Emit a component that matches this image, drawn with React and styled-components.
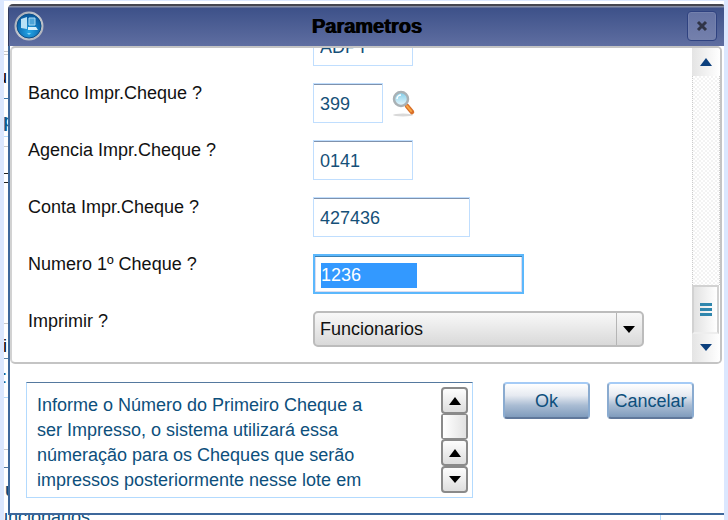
import React from 'react';
import styled, { createGlobalStyle } from 'styled-components';

const GlobalStyle = createGlobalStyle`
  * {
    box-sizing: border-box;
  }
  body {
    margin: 0;
    overflow: hidden;
    background: #dbe7fe;
    font-family: "Liberation Sans", Arial, sans-serif;
    font-size: 18px;
    line-height: 20px;
  }
  button, input, select, textarea {
    font: inherit;
    margin: 0;
  }
`;

const Page = styled.div`
  position: relative;
  height: 100vh;
  padding: 1px 4px 0;
  overflow: hidden;
`;

const Backdrop = styled.div`
  height: 100%;
  background: #fff;
  overflow: hidden;
`;

const Slice = styled.div`
  height: ${(props) => props.height}px;
  padding-top: ${(props) => props.pad || 0}px;
  border-bottom: 1px solid ${(props) => props.line || 'transparent'};
  color: ${(props) => props.ink || '#000'};
  font-weight: ${(props) => (props.bold ? 'bold' : 'normal')};
  text-indent: ${(props) => props.shift || 0}px;
  overflow: hidden;
`;

const LastSlice = styled.div`
  height: 40px;
  margin-right: 63px;
  border-right: 1px solid #b5dbfd;
  color: #0d4f7c;
  text-indent: -17px;
`;

const Dialog = styled.section`
  position: absolute;
  top: 4px;
  left: 8px;
  right: 4px;
  background: #fff;
  border-bottom: 2px solid #3e689b;
  border-radius: 5px 2px 0 0;
  overflow: hidden;
`;

const Header = styled.header`
  display: grid;
  grid-template-columns: 44px 1fr 44px;
  align-items: center;
  height: 42px;
  border-top: 2px solid #45464f;
  border-left: 1px solid #303a5e;
  background: linear-gradient(#858ca3 0, #858ca3 1px, #3d5189 2px, #5f6ea1 100%);
`;

const Title = styled.h1`
  margin: 0;
  text-align: center;
  font-size: 20px;
  line-height: 20px;
  color: #000;
  text-shadow: 1px 0 #000;
`;

const Logo = styled.svg`
  display: block;
  margin-left: 5px;
`;

const CloseButton = styled.button`
  display: flex;
  align-items: center;
  justify-content: center;
  width: 30px;
  height: 30px;
  margin-left: 7px;
  padding: 0;
  border: 1px solid #2f4280;
  border-radius: 4px;
  background: linear-gradient(#6573a4, #7480ac);
  box-shadow: inset 0 0 0 1px #7481ad;
`;

const Main = styled.div`
  border-left: 2px solid #3e689b;
`;

const Panel = styled.div`
  display: flex;
  height: 318px;
  margin-right: 2px;
  border: 2px solid #c4c4c4;
  border-left-color: #d2d2d2;
  border-radius: 5px;
  overflow: hidden;
`;

const Form = styled.form`
  flex: 1;
  display: flex;
  flex-direction: column;
  justify-content: flex-end;
  gap: 17px;
  padding: 0 48px 15px 16px;
  overflow: hidden;
`;

const Row = styled.div`
  display: grid;
  grid-template-columns: 285px 1fr;
  flex: none;
`;

const Label = styled.label`
  color: #111;
`;

const Field = styled.div`
  display: flex;
  align-items: center;
  gap: 9px;
`;

const TextInput = styled.input`
  width: ${(props) => props.$width}px;
  height: 40px;
  padding: 2px 6px 0;
  border: 1px solid #c0defe;
  border-radius: 0;
  outline: none;
  color: #165078;
  background: #fff;
  box-shadow: inset 0 1px #7f92ad;
`;

const ActiveInput = styled(TextInput)`
  border: 2px solid #5cb8fc;
  color: #fff;
  background: linear-gradient(#3399ff, #3399ff) 6px 7px / 96px 25px no-repeat #fff;
  box-shadow: inset 0 1px #3a7fb2, inset 0 0 0 1px #dcdcee;
`;

const LookupButton = styled.button`
  padding: 0;
  border: 0;
  background: none;
  svg {
    display: block;
  }
`;

const SelectBox = styled.div`
  position: relative;
  flex: 1;
  svg {
    position: absolute;
    top: 15px;
    right: 9px;
    pointer-events: none;
  }
`;

const Select = styled.select`
  display: block;
  appearance: none;
  width: 100%;
  height: 36px;
  padding: 0 5px;
  border: 2px solid #bcbcbc;
  border-radius: 5px;
  color: #111;
  background:
    linear-gradient(#b5b5b5, #b5b5b5) right 25px top / 1px 100% no-repeat,
    linear-gradient(#f8f8f8, #d9d9d9);
`;

const Scrollbar = styled.div`
  display: flex;
  flex-direction: column;
  width: 28px;
`;

const ScrollArrow = styled.button`
  display: flex;
  align-items: center;
  justify-content: center;
  height: 28px;
  padding: 0;
  border: 0;
  background: linear-gradient(90deg, #e4e4e4, #fff);
`;

const Track = styled.div`
  flex: 1;
  border: 1px dotted #ccc;
  border-width: 0 1px;
  background: repeating-conic-gradient(#f3f3f3 0 25%, #fff 0 50%) 0 0 / 4px 4px;
`;

const Thumb = styled.div`
  display: flex;
  flex-direction: column;
  align-items: center;
  justify-content: center;
  gap: 2px;
  height: 49px;
  margin-right: 1px;
  border: 2px solid #d2d2d2;
  border-bottom-color: #eee;
  background: linear-gradient(90deg, #e2e2e2, #fff);
`;

const Grip = styled.span`
  width: 12px;
  height: 3px;
  background: #2f86ad;
`;

const Footer = styled.footer`
  display: flex;
  align-items: flex-start;
  padding: 18px 30px 15px 16px;
`;

const Message = styled.div`
  display: flex;
  flex: 1;
  height: 116px;
  margin-right: 30px;
  border: 1px solid #b3dafe;
  border-top: 1px solid #55799f;
`;

const MessageText = styled.textarea`
  flex: 1;
  min-width: 0;
  height: 100px;
  margin-top: 10px;
  padding: 0 0 0 10px;
  border: 0;
  outline: none;
  resize: none;
  overflow: hidden;
  white-space: pre;
  line-height: 25px;
  color: #0d4f7c;
  background: transparent;
`;

const MessageScroll = styled.div`
  display: flex;
  flex-direction: column;
  width: 27px;
  margin: 4px;
`;

const ScrollCell = styled.button`
  flex: 1;
  display: flex;
  align-items: center;
  justify-content: center;
  padding: 0;
  border: 2px solid #8a8a8a;
  border-radius: 4px;
  background: linear-gradient(#fdfdfd, #dedede);
`;

const ScrollHandle = styled(ScrollCell)`
  border-width: 1px 2px;
  border-radius: 2px;
  background: linear-gradient(90deg, #fff, #e2e2e2);
`;

const ActionButton = styled.button`
  width: 87px;
  height: 37px;
  padding: 0;
  border: 2px solid #8aabd0;
  border-top-color: #a5cbf6;
  border-bottom-color: #60789b;
  border-radius: 4px;
  color: #0d4f7c;
  background: linear-gradient(#fff 0, #e6eaf1 35%, #a9bcd3 65%, #809cbd 100%);
  & + & {
    margin-left: 17px;
  }
`;

const Arrow = ({ down, color = '#000' }) => (
  <svg width="12" height="8" viewBox="0 0 12 8">
    <path d={down ? 'M0 0H12L6 7Z' : 'M0 8H12L6 0Z'} fill={color} />
  </svg>
);

const LogoIcon = () => (
  <Logo width="30" height="30" viewBox="0 0 30 30">
    <defs>
      <radialGradient id="logoBlue" cx="50%" cy="75%" r="75%">
        <stop offset="0" stopColor="#24a6e6" />
        <stop offset="0.5" stopColor="#1178bd" />
        <stop offset="1" stopColor="#07559a" />
      </radialGradient>
      <linearGradient id="logoRing" x1="0" y1="0" x2="1" y2="1">
        <stop offset="0" stopColor="#9da3b0" />
        <stop offset="0.5" stopColor="#c6cad1" />
        <stop offset="1" stopColor="#a9adb6" />
      </linearGradient>
    </defs>
    <circle cx="15" cy="15" r="14.5" fill="url(#logoRing)" />
    <circle cx="15" cy="15" r="12" fill="url(#logoBlue)" stroke="#0d4f88" />
    <path d="M7 8L13 6V18L7 17Z" fill="#b9e1f6" />
    <path d="M15 7H21V14H15Z" fill="#4fa5d8" stroke="#a9d9f2" strokeWidth="1" />
    <path d="M14 16H22L24 19H14Z" fill="#d6effb" />
    <path d="M13 22H17L15 24Z" fill="#7fd3f7" />
  </Logo>
);

const CloseIcon = () => (
  <svg width="12" height="12" viewBox="0 0 12 12">
    <path d="M2 2L10 10M10 2L2 10" stroke="#303447" strokeWidth="3" />
  </svg>
);

const SearchIcon = () => (
  <svg width="24" height="27" viewBox="0 0 24 27">
    <defs>
      <linearGradient id="lens" x1="0" y1="0" x2="0" y2="1">
        <stop offset="0" stopColor="#7fcdea" />
        <stop offset="1" stopColor="#e9f8fd" />
      </linearGradient>
    </defs>
    <ellipse cx="11" cy="25" rx="10" ry="1.5" fill="#d9d9d9" />
    <path d="M15 16L20 22" stroke="#d9702a" strokeWidth="4.5" strokeLinecap="round" />
    <path d="M15 16L19 21" stroke="#f9a845" strokeWidth="2" strokeLinecap="round" />
    <circle cx="9" cy="9" r="7" fill="url(#lens)" stroke="#a9b1b5" strokeWidth="2.5" />
    <path d="M5 9A4 4 0 0 1 9 5" fill="none" stroke="#fff" strokeWidth="1.5" />
  </svg>
);

const message = [
  'Informe o Número do Primeiro Cheque a',
  'ser Impresso, o sistema utilizará essa',
  'númeração para os Cheques que serão',
  'impressos posteriormente nesse lote em',
].join('\n');

const fields = [
  { id: 'codigo', label: '', value: 'ADPT', width: 100 },
  { id: 'banco', label: 'Banco Impr.Cheque ?', value: '399', width: 70, lookup: true },
  { id: 'agencia', label: 'Agencia Impr.Cheque ?', value: '0141', width: 100 },
  { id: 'conta', label: 'Conta Impr.Cheque ?', value: '427436', width: 157 },
  { id: 'numero', label: 'Numero 1º Cheque ?', value: '1236', width: 211, active: true },
];

const FieldRow = ({ id, label, value, width, lookup, active }) => {
  const Control = active ? ActiveInput : TextInput;
  return (
    <Row>
      <Label htmlFor={id}>{label}</Label>
      <Field>
        <Control id={id} $width={width} defaultValue={value} aria-label={label || 'Codigo'} />
        {lookup && (
          <LookupButton type="button" aria-label="Pesquisar">
            <SearchIcon />
          </LookupButton>
        )}
      </Field>
    </Row>
  );
};

const Background = () => (
  <Backdrop>
    <Slice height={51} line="#c9c9c9" />
    <Slice height={3} line="#c9c9c9" />
    <Slice height={44} pad={12} shift={-7} line="#3e78a8">u</Slice>
    <Slice height={38} pad={12} shift={-1} ink="#0d5a8c" bold line="#b5dbfd">p</Slice>
    <Slice height={10} line="#c9c9c9" />
    <Slice height={27} line="#222" />
    <Slice height={9} line="#222" />
    <Slice height={141} line="#c9c9c9" />
    <Slice height={35} pad={12} shift={-1} line="#5c84a8">i</Slice>
    <Slice height={39} pad={8} shift={-2} ink="#0d5a8c" line="#b5dbfd">:</Slice>
    <Slice height={52} line="#c9c9c9" />
    <Slice height={18} line="#55799f" />
    <Slice height={39} pad={12} shift={1} ink="#0d4f7c" bold>u</Slice>
    <LastSlice>Funcionarios</LastSlice>
  </Backdrop>
);

const ParametrosDialog = () => (
  <Dialog>
    <Header>
      <LogoIcon />
      <Title>Parametros</Title>
      <CloseButton aria-label="Fechar">
        <CloseIcon />
      </CloseButton>
    </Header>
    <Main>
      <Panel>
        <Form>
          {fields.map((field) => (
            <FieldRow key={field.id} {...field} />
          ))}
          <Row>
            <Label htmlFor="imprimir">Imprimir ?</Label>
            <SelectBox>
              <Select id="imprimir">
                <option>Funcionarios</option>
              </Select>
              <Arrow down />
            </SelectBox>
          </Row>
        </Form>
        <Scrollbar>
          <ScrollArrow aria-label="Acima">
            <Arrow color="#0b3f7d" />
          </ScrollArrow>
          <Track />
          <Thumb>
            <Grip />
            <Grip />
            <Grip />
          </Thumb>
          <ScrollArrow aria-label="Abaixo">
            <Arrow down color="#0b3f7d" />
          </ScrollArrow>
        </Scrollbar>
      </Panel>
      <Footer>
        <Message>
          <MessageText aria-label="Ajuda" readOnly value={message} />
          <MessageScroll>
            <ScrollCell aria-label="Inicio">
              <Arrow />
            </ScrollCell>
            <ScrollHandle aria-label="Posicao" />
            <ScrollCell aria-label="Linha acima">
              <Arrow />
            </ScrollCell>
            <ScrollCell aria-label="Linha abaixo">
              <Arrow down />
            </ScrollCell>
          </MessageScroll>
        </Message>
        <ActionButton>Ok</ActionButton>
        <ActionButton>Cancelar</ActionButton>
      </Footer>
    </Main>
  </Dialog>
);

export default () => (
  <>
    <GlobalStyle />
    <Page>
      <Background />
      <ParametrosDialog />
    </Page>
  </>
);
